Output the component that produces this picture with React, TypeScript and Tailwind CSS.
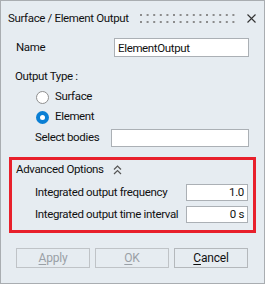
import React, { useState } from 'react'

const font = { fontFamily: 'Roboto, "Liberation Sans", Arial, sans-serif' }

const Radio = ({ checked, label, onClick }: { checked: boolean; label: string; onClick: () => void }) => (
  <div className="flex h-[20px] items-center pl-[35px] cursor-default" onClick={onClick}>
    {checked ? (
      <span className="flex h-[13px] w-[13px] items-center justify-center rounded-full bg-[#0a7fd4]">
        <span className="h-[5px] w-[5px] rounded-full bg-white" />
      </span>
    ) : (
      <span className="h-[13px] w-[13px] rounded-full border border-[#8f8f8f] bg-white" />
    )}
    <span className="ml-[6px]">{label}</span>
  </div>
)

const Grip = () => (
  <svg width="96" height="10" viewBox="0 0 96 10" className="block shrink-0">
    {Array.from({ length: 15 }).map((_, i) => (
      <g key={i} fill="#8c8c8c">
        <rect x={i * 6.6} y={0} width={2} height={2} />
        <rect x={i * 6.6} y={7} width={2} height={2} />
      </g>
    ))}
  </svg>
)

const Button = ({ label, rest, disabled }: { label: string; rest: string; disabled?: boolean }) => (
  <button
    style={font}
    className={
      disabled
        ? 'h-[20px] w-[74px] border border-[#bfc3c7] bg-[#e6ecf1] text-[12px] tracking-[-0.2px] text-[#9aa0a6] leading-none'
        : 'h-[20px] w-[74px] border border-[#b4b8bc] bg-[#e6ecf1] text-[12px] tracking-[-0.2px] text-[#111111] leading-none'
    }
  >
    <span className="underline underline-offset-2">{label}</span>
    {rest}
  </button>
)

export default function App() {
  const [type, setType] = useState('element')
  const [name, setName] = useState('ElementOutput')

  return (
    <div
      style={font}
      className="flex h-[284px] w-[265px] flex-col whitespace-nowrap border border-[#a9adb1] bg-[#e6ecf1] text-[11.5px] tracking-[-0.35px] text-[#111111]"
    >
      <div className="flex h-[35px] shrink-0 items-center pl-[7px]">
        <span className="flex-1">Surface / Element Output</span>
        <Grip />
        <svg width="9" height="9" viewBox="0 0 9 9" className="ml-[11px] mr-[8px] block shrink-0">
          <path d="M0.5 0.5 L8.5 8.5 M8.5 0.5 L0.5 8.5" stroke="#333" strokeWidth="1.1" />
        </svg>
      </div>

      <div className="mt-[2px] flex h-[19px] items-center pl-[15px] pr-[15px]">
        <span className="w-[98px] shrink-0">Name</span>
        <input
          value={name}
          onChange={(e) => setName(e.target.value)}
          className="h-[19px] min-w-0 flex-1 border border-[#abb0b5] bg-white px-[3px] text-[11.5px] tracking-[-0.35px] text-[#111111] outline-none"
          style={font}
        />
      </div>

      <div className="mt-[10px] flex h-[20px] items-center pl-[14px]">Output Type :</div>
      <Radio checked={type === 'surface'} label="Surface" onClick={() => setType('surface')} />
      <Radio checked={type === 'element'} label="Element" onClick={() => setType('element')} />

      <div className="mt-[2px] flex h-[18px] items-center pl-[34px] pr-[15px]">
        <span className="w-[76px] shrink-0">Select bodies</span>
        <input className="h-[18px] min-w-0 flex-1 border border-[#abb0b5] bg-white outline-none" />
      </div>

      <div className="ml-[8px] mt-[10px] w-[247px] border-[3px] border-[#e8202b] pb-[7px]">
        <div className="flex h-[20px] items-center pl-[4px]">
          <span>Advanced Options</span>
          <svg width="9" height="10" viewBox="0 0 9 10" className="ml-[9px] block">
            <path d="M1 4.5 L4.5 1 L8 4.5 M1 9 L4.5 5.5 L8 9" fill="none" stroke="#555" strokeWidth="1.2" />
          </svg>
        </div>
        <div className="mt-[4px] flex h-[17px] items-center pl-[23px] pr-[5px]">
          <span className="min-w-0 flex-1">Integrated output frequency</span>
          <div className="flex h-[17px] w-[62px] shrink-0 items-center justify-end border border-[#abb0b5] bg-white pr-[3px]">1.0</div>
        </div>
        <div className="mt-[5px] flex h-[17px] items-center pl-[23px] pr-[5px]">
          <span className="min-w-0 flex-1">Integrated output time interval</span>
          <div className="flex h-[17px] w-[62px] shrink-0 items-center justify-end border border-[#abb0b5] bg-white pr-[3px]">0 s</div>
        </div>
      </div>

      <div className="mt-[15px] flex gap-[5px] pl-[15px]">
        <Button label="A" rest="pply" disabled />
        <Button label="O" rest="K" disabled />
        <Button label="C" rest="ancel" />
      </div>
    </div>
  )
}
